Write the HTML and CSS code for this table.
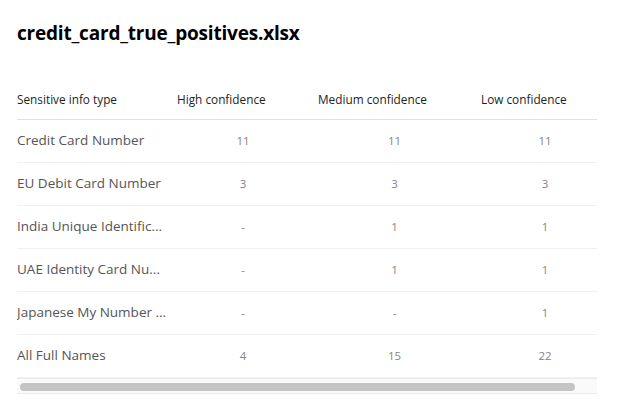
FILE: index.html
```html
<!DOCTYPE html>
<html>
<head>
<meta charset="utf-8">
<link rel="stylesheet" href="styles.css">
</head>
<body>
<div class="page">
  <h1 class="title">credit_card_true_positives.xlsx</h1>
  <div class="viewport">
    <div class="grid">
      <div class="row head">
        <div class="cell name">Sensitive info type</div>
        <div class="cell">High confidence</div>
        <div class="cell">Medium confidence</div>
        <div class="cell">Low confidence</div>
      </div>
      <div class="row">
        <div class="cell name">Credit Card Number</div>
        <div class="cell num">11</div><div class="cell num">11</div><div class="cell num">11</div>
      </div>
      <div class="row">
        <div class="cell name">EU Debit Card Number</div>
        <div class="cell num">3</div><div class="cell num">3</div><div class="cell num">3</div>
      </div>
      <div class="row">
        <div class="cell name">India Unique Identific...</div>
        <div class="cell num">-</div><div class="cell num">1</div><div class="cell num">1</div>
      </div>
      <div class="row">
        <div class="cell name">UAE Identity Card Nu...</div>
        <div class="cell num">-</div><div class="cell num">1</div><div class="cell num">1</div>
      </div>
      <div class="row">
        <div class="cell name">Japanese My Number ...</div>
        <div class="cell num">-</div><div class="cell num">-</div><div class="cell num">1</div>
      </div>
      <div class="row">
        <div class="cell name">All Full Names</div>
        <div class="cell num">4</div><div class="cell num">15</div><div class="cell num">22</div>
      </div>
    </div>
  </div>
  <div class="scrollbar"><div class="thumb"></div></div>
</div>
</body>
</html>
```
FILE: styles.css
```css
* { box-sizing: border-box; }
html, body { margin: 0; padding: 0; background: #ffffff; }
body { font-family: "Open Sans", "Noto Sans", sans-serif; color: #252423; }
.page { padding: 21px 0 0 17px; width: 597px; }
.title {
  margin: 0;
  font-size: 19px;
  line-height: 24px;
  font-weight: 700;
  color: #000000;
  letter-spacing: -0.2px;
}
.viewport { margin-top: 33px; width: 580px; overflow: hidden; }
.grid { width: 602px; }
.row {
  display: grid;
  grid-template-columns: 160px 141px 163px 138px;
  height: 43px;
  align-items: center;
  border-bottom: 1px solid #f1f1f1;
}
.row.head { height: 42px; border-bottom: 1px solid #e1e1e1; }
.cell { white-space: nowrap; overflow: hidden; }
.head .cell { font-size: 11.8px; color: #201f1e; }
.name { font-size: 13.5px; color: #555555; padding-bottom: 2px; }
.head .name { font-size: 11.8px; color: #201f1e; padding-bottom: 0; }
.num { font-size: 11.5px; color: #858585; text-align: center; padding-right: 10px; padding-bottom: 2px; }
.row .num:nth-child(2) { padding-right: 9px; }
.scrollbar {
  width: 580px;
  height: 16px;
  background: #fafafa;
  border-top: 1px solid #ececec;
  border-bottom: 1px solid #ececec;
  padding: 4px 0 0 3px;
}
.thumb { width: 555px; height: 8px; border-radius: 4px; background: #c4c4c4; }
```
